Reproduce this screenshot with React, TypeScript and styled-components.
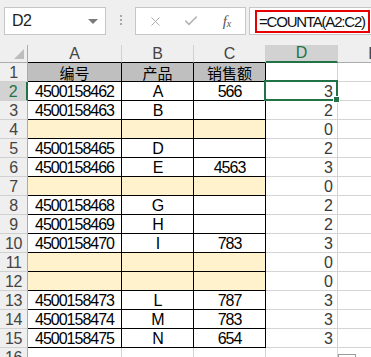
import React from "react";
import styled, { createGlobalStyle, css } from "styled-components";
import { X, Check } from "lucide-react";

const GREEN = "#217346";
const HEAD_BG = "#efefef";
const GRID = "#d4d4d4";

const GlobalStyle = createGlobalStyle`
  body {
    margin: 0;
    background: #ffffff;
    font-family: "Liberation Sans", Arial, sans-serif;
    overflow: hidden;
  }
`;

type Fill = "plain" | "gray" | "yellow";

interface RowData {
  a: string;
  b: string;
  c: string;
  d: string;
  fill: Fill;
}

const rows: RowData[] = [
  { a: "编号", b: "产品", c: "销售额", d: "", fill: "gray" },
  { a: "4500158462", b: "A", c: "566", d: "3", fill: "plain" },
  { a: "4500158463", b: "B", c: "", d: "2", fill: "plain" },
  { a: "", b: "", c: "", d: "0", fill: "yellow" },
  { a: "4500158465", b: "D", c: "", d: "2", fill: "plain" },
  { a: "4500158466", b: "E", c: "4563", d: "3", fill: "plain" },
  { a: "", b: "", c: "", d: "0", fill: "yellow" },
  { a: "4500158468", b: "G", c: "", d: "2", fill: "plain" },
  { a: "4500158469", b: "H", c: "", d: "2", fill: "plain" },
  { a: "4500158470", b: "I", c: "783", d: "3", fill: "plain" },
  { a: "", b: "", c: "", d: "0", fill: "yellow" },
  { a: "", b: "", c: "", d: "0", fill: "yellow" },
  { a: "4500158473", b: "L", c: "787", d: "3", fill: "plain" },
  { a: "4500158474", b: "M", c: "783", d: "3", fill: "plain" },
  { a: "4500158475", b: "N", c: "654", d: "3", fill: "plain" },
];

const fillColor: Record<Fill, string> = {
  plain: "#ffffff",
  gray: "#bfbfbf",
  yellow: "#fff2cc",
};

const App = () => {
  return (
    <Sheet>
      <GlobalStyle />
      <FormulaBar>
        <NameBox>
          <NameText>D2</NameText>
          <DropArrow />
        </NameBox>
        <Grip>
          <Dot />
          <Dot />
          <Dot />
        </Grip>
        <FxButtons>
          <FxSlot>
            <X size={15} strokeWidth={1.5} color="#a8a8a8" />
          </FxSlot>
          <FxSlot>
            <Check size={16} strokeWidth={2.4} color="#b4b4b4" />
          </FxSlot>
          <FxSlot>
            <FxText>
              f<sub>x</sub>
            </FxText>
          </FxSlot>
        </FxButtons>
        <FormulaInput>
          <Highlight>=COUNTA(A2:C2)</Highlight>
        </FormulaInput>
      </FormulaBar>

      <Grid>
        <Corner>
          <CornerMark />
        </Corner>
        {["A", "B", "C", "D", "E"].map((col) => (
          <ColHead key={col} $table={col !== "D" && col !== "E"} $selected={col === "D"}>
            {col}
          </ColHead>
        ))}

        {rows.map((row, i) => {
          const n = i + 1;
          return (
            <React.Fragment key={n}>
              <RowHead $selected={n === 2}>{n}</RowHead>
              <TableCell $fill={row.fill} $zh={n === 1}>
                {row.a}
              </TableCell>
              <TableCell $fill={row.fill} $zh={n === 1}>
                {row.b}
              </TableCell>
              <TableCell $fill={row.fill} $zh={n === 1}>
                {row.c}
              </TableCell>
              <CountCell $active={n === 2}>
                {row.d}
                {n === 2 && <FillHandle />}
              </CountCell>
              <BlankCell />
            </React.Fragment>
          );
        })}

        <RowHead $selected={false}>16</RowHead>
        <BlankCell />
        <BlankCell />
        <BlankCell />
        <BlankCell />
        <BlankCell />
      </Grid>

      <QuickButton>
        <QuickInner />
      </QuickButton>
    </Sheet>
  );
};

export default App;

const Sheet = styled.div`
  position: relative;
  width: 371px;
  height: 357px;
  overflow: hidden;
  background: ${HEAD_BG};
`;

/* formula bar */

const FormulaBar = styled.div`
  display: flex;
  align-items: flex-start;
  height: 45px;
  padding-top: 7px;
  box-sizing: border-box;
`;

const NameBox = styled.div`
  display: flex;
  align-items: center;
  justify-content: space-between;
  margin-left: 4px;
  width: 102px;
  height: 28px;
  box-sizing: border-box;
  padding: 0 7px 0 7px;
  background: #ffffff;
  border: 1px solid #c6c6c6;
`;

const NameText = styled.span`
  font-size: 16px;
  color: #222;
  letter-spacing: -0.5px;
`;

const DropArrow = styled.span`
  width: 0;
  height: 0;
  border-left: 5px solid transparent;
  border-right: 5px solid transparent;
  border-top: 5px solid #7a7a7a;
`;

const Grip = styled.div`
  display: flex;
  flex-direction: column;
  gap: 2px;
  margin: 8px 13px 0 14px;
`;

const Dot = styled.span`
  width: 2px;
  height: 2px;
  background: #a9a9a9;
`;

const FxButtons = styled.div`
  display: grid;
  grid-template-columns: repeat(3, 36px);
  align-items: center;
  width: 111px;
  height: 28px;
  box-sizing: border-box;
  padding-left: 1px;
  background: #ffffff;
  border: 1px solid #c6c6c6;
`;

const FxSlot = styled.div`
  display: flex;
  align-items: center;
  justify-content: center;
`;

const FxText = styled.span`
  font-family: "Liberation Serif", "Times New Roman", serif;
  font-style: italic;
  font-size: 15px;
  color: #555;
  line-height: 1;

  sub {
    font-size: 10px;
    vertical-align: -1px;
  }
`;

const FormulaInput = styled.div`
  flex: 1;
  margin-left: 3px;
  height: 28px;
  box-sizing: border-box;
  padding: 2px 0 0 5px;
  background: #ffffff;
  border: 1px solid #c6c6c6;
  border-right: none;
`;

const Highlight = styled.div`
  display: flex;
  align-items: center;
  width: 115px;
  height: 23px;
  box-sizing: border-box;
  padding-left: 2px;
  border: 2px solid #e60000;
  font-size: 15px;
  letter-spacing: -1.2px;
  color: #111;
  white-space: nowrap;
`;

/* grid */

const Grid = styled.div`
  display: grid;
  grid-template-columns: 28px 94px 72px 72px 72px 72px;
  grid-template-rows: 18px repeat(16, 19px);
`;

const Corner = styled.div`
  position: relative;
  background: ${HEAD_BG};
  border-right: 1px solid #ababab;
  border-bottom: 1px solid #ababab;
`;

const CornerMark = styled.span`
  position: absolute;
  right: 3px;
  bottom: 3px;
  width: 0;
  height: 0;
  border-left: 10px solid transparent;
  border-bottom: 10px solid #bdbdbd;
`;

const headText = css`
  font-size: 16px;
  line-height: 1;
`;

const ColHead = styled.div<{ $table: boolean; $selected: boolean }>`
  ${headText};
  display: flex;
  align-items: center;
  justify-content: center;
  box-sizing: border-box;
  background: ${(p) => (p.$selected ? "#d2d2d2" : HEAD_BG)};
  color: ${(p) => (p.$selected ? GREEN : "#444")};
  border-right: 1px solid #d0d0d0;
  border-bottom: ${(p) =>
    p.$selected ? `2px solid ${GREEN}` : p.$table ? "1px solid #000" : "1px solid #ababab"};
`;

const RowHead = styled.div<{ $selected: boolean }>`
  ${headText};
  display: flex;
  align-items: center;
  justify-content: center;
  box-sizing: border-box;
  padding-top: 1px;
  letter-spacing: -0.5px;
  background: ${(p) => (p.$selected ? "#d2d2d2" : HEAD_BG)};
  color: ${(p) => (p.$selected ? GREEN : "#444")};
  border-right: ${(p) => (p.$selected ? `2px solid ${GREEN}` : "1px solid #ababab")};
  border-bottom: 1px solid #d0d0d0;
`;

const TableCell = styled.div<{ $fill: Fill; $zh: boolean }>`
  display: flex;
  align-items: center;
  justify-content: center;
  box-sizing: border-box;
  padding-top: 1px;
  background: ${(p) => fillColor[p.$fill]};
  border-right: 1px solid #000;
  border-bottom: 1px solid #000;
  color: #000;
  white-space: nowrap;
  font-family: ${(p) =>
    p.$zh
      ? `"Noto Sans CJK SC", sans-serif`
      : `"Liberation Sans", Arial, sans-serif`};
  font-size: ${(p) => (p.$zh ? "15px" : "16px")};
  letter-spacing: ${(p) => (p.$zh ? "0" : "-1px")};
`;

const CountCell = styled.div<{ $active: boolean }>`
  position: relative;
  display: flex;
  align-items: center;
  justify-content: flex-end;
  box-sizing: border-box;
  padding: 1px 4px 0 0;
  background: #ffffff;
  border-right: 1px solid ${GRID};
  border-bottom: 1px solid ${GRID};
  font-size: 16px;
  color: #3a3a3a;

  ${(p) =>
    p.$active &&
    css`
      &::after {
        content: "";
        position: absolute;
        left: -2px;
        top: -2px;
        right: -1px;
        bottom: -1px;
        border: 2px solid ${GREEN};
      }
    `}
`;

const FillHandle = styled.span`
  position: absolute;
  right: -3px;
  bottom: -3px;
  width: 5px;
  height: 5px;
  background: ${GREEN};
  border: 1px solid #ffffff;
  z-index: 1;
`;

const BlankCell = styled.div`
  background: #ffffff;
  border-right: 1px solid ${GRID};
  border-bottom: 1px solid ${GRID};
`;

const QuickButton = styled.div`
  position: absolute;
  left: 338px;
  top: 354px;
  width: 18px;
  height: 18px;
  box-sizing: border-box;
  padding: 3px;
  background: #ffffff;
  border: 1px solid #9a9a9a;
`;

const QuickInner = styled.div`
  width: 8px;
  height: 10px;
  background: #3c7fe0;
  border-right: 3px solid #e8e8e8;
`;
